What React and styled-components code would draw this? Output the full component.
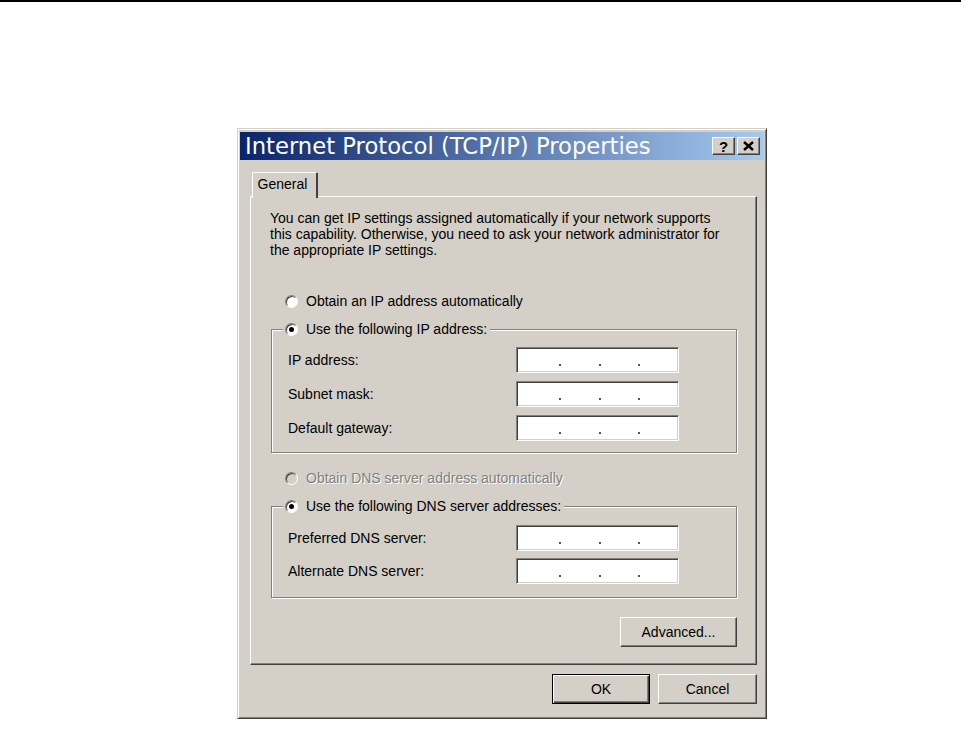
import React from 'react'
import styled, { createGlobalStyle } from 'styled-components'

const Global = createGlobalStyle`
  body {
    margin: 0;
    background: #fff;
    font-family: "Liberation Sans", Arial, sans-serif;
  }
`

const face = '#d4d0c8'

const TopRule = styled.div`
  height: 2px;
  background: #000;
`

const Dialog = styled.div`
  box-sizing: border-box;
  margin: 126px 0 0 237px;
  width: 530px;
  height: 591px;
  background: ${face};
  border: 1px solid;
  border-color: ${face} #404040 #404040 ${face};
  box-shadow: inset 1px 1px #fff, inset -1px -1px #808080;
  padding: 3px 2px 2px 2px;
  display: flex;
  flex-direction: column;
`

const TitleBar = styled.div`
  height: 28px;
  background: linear-gradient(to right, #0a246a, #a6caf0);
  display: flex;
  align-items: center;
  padding: 0 4px 0 5px;
`

const Title = styled.div`
  flex: 1;
  color: #fff;
  font-family: "DejaVu Sans", sans-serif;
  font-size: 22.7px;
  line-height: 28px;
  white-space: nowrap;
`

const CapButton = styled.button`
  box-sizing: border-box;
  width: 23px;
  height: 18px;
  margin-left: 2px;
  padding: 0;
  background: ${face};
  border: 1px solid;
  border-color: #fff #404040 #404040 #fff;
  box-shadow: inset -1px -1px #808080;
  display: flex;
  align-items: center;
  justify-content: center;
  font-family: "Liberation Sans", sans-serif;
  font-weight: bold;
  font-size: 15px;
  color: #000;
`

const Body = styled.div`
  padding: 12px 7px 0 10px;
  display: flex;
  flex-direction: column;
`

const TabStrip = styled.div`
  display: flex;
  padding-left: 2px;
`

const Tab = styled.div`
  position: relative;
  z-index: 1;
  box-sizing: border-box;
  width: 66px;
  height: 26px;
  margin-bottom: -2px;
  background: ${face};
  border: 1px solid #fff;
  border-right: 2px solid #404040;
  border-bottom: none;
  border-radius: 2px 2px 0 0;
  font-size: 14px;
  display: flex;
  align-items: center;
  justify-content: center;
  padding: 0 4px 4px 0;
`

const Panel = styled.div`
  box-sizing: border-box;
  width: 507px;
  height: 469px;
  border: 1px solid;
  border-color: #fff #404040 #404040 #fff;
  box-shadow: inset -1px -1px #808080;
  padding: 13px 19px 0 19px;
  font-size: 14px;
  color: #000;
  display: flex;
  flex-direction: column;
`

const Intro = styled.p`
  margin: 0;
  line-height: 16px;
  white-space: nowrap;
`

const RadioRow = styled.label`
  display: flex;
  align-items: center;
  height: 16px;
  white-space: nowrap;
  margin: ${p => p.$mt || 0}px 0 0 15px;
  color: ${p => (p.$disabled ? '#808080' : '#000')};
  text-shadow: ${p => (p.$disabled ? '1px 1px #fff' : 'none')};
`

const RadioDot = styled.span`
  box-sizing: border-box;
  flex: none;
  width: 13px;
  height: 13px;
  margin-right: 8px;
  border-radius: 50%;
  border: 1px solid;
  border-color: #808080 #fff #fff #808080;
  background: ${p => (p.$disabled ? face : '#fff')};
  box-shadow: inset 1px 1px #404040;
  display: flex;
  align-items: center;
  justify-content: center;
  &::after {
    content: '';
    width: 5px;
    height: 5px;
    border-radius: 50%;
    background: #000;
    display: ${p => (p.$checked ? 'block' : 'none')};
  }
`

const Group = styled.fieldset`
  box-sizing: border-box;
  width: 466px;
  margin: ${p => p.$mt}px 0 0 1px;
  padding: ${p => p.$pt}px 57px ${p => p.$pb}px 16px;
  border: 1px solid #808080;
  box-shadow: 1px 1px #fff, inset 1px 1px #fff;
  display: flex;
  flex-direction: column;
  gap: ${p => p.$gap}px;
`

const Legend = styled.legend`
  margin-left: -5px;
  padding: 0 3px 0 2px;
  background: ${face};
  & > label {
    margin: 0;
  }
`

const Field = styled.div`
  display: flex;
  align-items: center;
  justify-content: space-between;
`

const IpBox = styled.div`
  box-sizing: border-box;
  width: 163px;
  height: 26px;
  background: #fff;
  border: 1px solid;
  border-color: #808080 #fff #fff #808080;
  box-shadow: inset 1px 1px #404040, inset -1px -1px ${face};
  position: relative;
`

const Dot = styled.i`
  position: absolute;
  top: 16px;
  width: 2px;
  height: 2px;
  background: #555;
`

const ButtonRow = styled.div`
  display: flex;
  justify-content: flex-end;
  gap: ${p => p.$gap || 0}px;
  margin-top: ${p => p.$mt}px;
`

const Button = styled.button`
  box-sizing: border-box;
  width: ${p => p.$w}px;
  height: 30px;
  padding: 0;
  background: ${face};
  font-family: "Liberation Sans", Arial, sans-serif;
  font-size: 14px;
  color: #000;
  border: 1px solid;
  border-color: ${p => (p.$default ? '#000' : '#fff #404040 #404040 #fff')};
  box-shadow: ${p =>
    p.$default
      ? 'inset 1px 1px #fff, inset -1px -1px #404040, inset -2px -2px #808080'
      : 'inset -1px -1px #808080'};
`

function IpField({ label }) {
  return (
    <Field>
      <span>{label}</span>
      <IpBox>
        <Dot style={{ left: 42 }} />
        <Dot style={{ left: 82 }} />
        <Dot style={{ left: 121 }} />
      </IpBox>
    </Field>
  )
}

function Radio({ children, checked, disabled, mt }) {
  return (
    <RadioRow $mt={mt} $disabled={disabled}>
      <RadioDot $checked={checked} $disabled={disabled} />
      {children}
    </RadioRow>
  )
}

export default function App() {
  return (
    <>
      <Global />
      <TopRule />
      <Dialog>
        <TitleBar>
          <Title>Internet Protocol (TCP/IP) Properties</Title>
          <CapButton>?</CapButton>
          <CapButton>
            <svg width="11" height="10" viewBox="0 0 11 10">
              <path d="M1 1 L10 9 M10 1 L1 9" stroke="#000" strokeWidth="2.4" />
            </svg>
          </CapButton>
        </TitleBar>
        <Body>
          <TabStrip>
            <Tab>General</Tab>
          </TabStrip>
          <Panel>
            <Intro>
              You can get IP settings assigned automatically if your network supports<br />
              this capability. Otherwise, you need to ask your network administrator for<br />
              the appropriate IP settings.
            </Intro>
            <Radio mt={35}>Obtain an IP address automatically</Radio>
            <Group $mt={12} $pt={10} $pb={11} $gap={8}>
              <Legend>
                <Radio checked>Use the following IP address:</Radio>
              </Legend>
              <IpField label="IP address:" />
              <IpField label="Subnet mask:" />
              <IpField label="Default gateway:" />
            </Group>
            <Radio mt={17} disabled>Obtain DNS server address automatically</Radio>
            <Group $mt={12} $pt={11} $pb={13} $gap={7}>
              <Legend>
                <Radio checked>Use the following DNS server addresses:</Radio>
              </Legend>
              <IpField label="Preferred DNS server:" />
              <IpField label="Alternate DNS server:" />
            </Group>
            <ButtonRow $mt={19}>
              <Button $w={117}>Advanced...</Button>
            </ButtonRow>
          </Panel>
          <ButtonRow $mt={9} $gap={8}>
            <Button $w={98} $default>OK</Button>
            <Button $w={99}>Cancel</Button>
          </ButtonRow>
        </Body>
      </Dialog>
    </>
  )
}
